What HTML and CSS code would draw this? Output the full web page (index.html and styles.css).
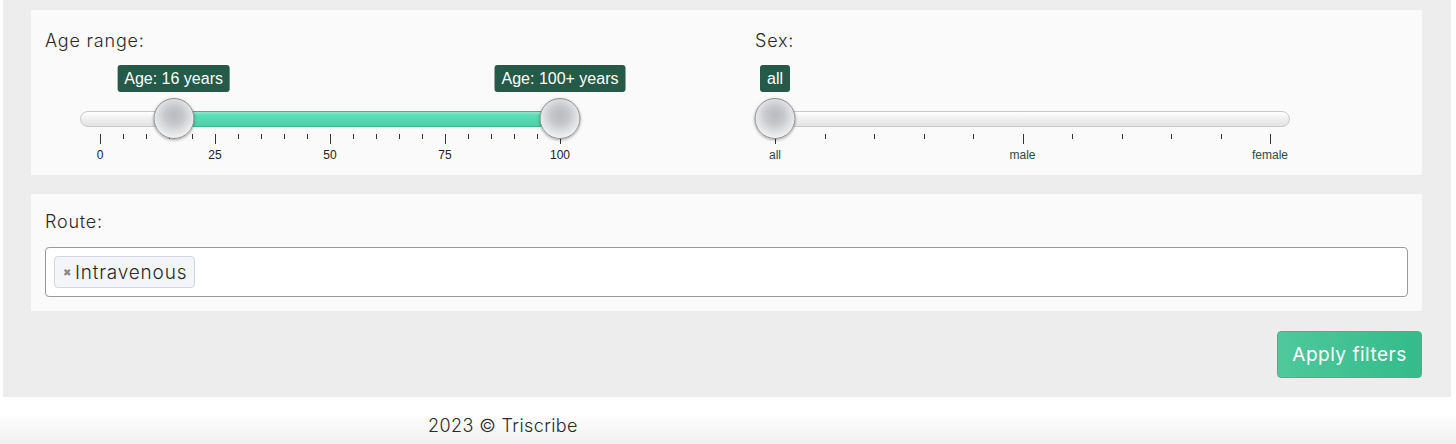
FILE: index.html
```html
<!DOCTYPE html>
<html>
<head>
<meta charset="utf-8">
<link rel="stylesheet" href="styles.css">
</head>
<body>
<main class="wrap">
  <section class="panel panel-sliders">
    <div class="field field-age">
      <div class="label">Age range:</div>
      <div class="irs irs-age">
        <div class="irs-line"></div>
        <div class="irs-scale">
          <div class="irs-bar" style="left:16%;right:0%"></div>
          <span class="tick major" style="left:0%"></span>
          <span class="tick" style="left:5%"></span>
          <span class="tick" style="left:10%"></span>
          <span class="tick" style="left:15%"></span>
          <span class="tick" style="left:20%"></span>
          <span class="tick major" style="left:25%"></span>
          <span class="tick" style="left:30%"></span>
          <span class="tick" style="left:35%"></span>
          <span class="tick" style="left:40%"></span>
          <span class="tick" style="left:45%"></span>
          <span class="tick major" style="left:50%"></span>
          <span class="tick" style="left:55%"></span>
          <span class="tick" style="left:60%"></span>
          <span class="tick" style="left:65%"></span>
          <span class="tick" style="left:70%"></span>
          <span class="tick major" style="left:75%"></span>
          <span class="tick" style="left:80%"></span>
          <span class="tick" style="left:85%"></span>
          <span class="tick" style="left:90%"></span>
          <span class="tick" style="left:95%"></span>
          <span class="tick major" style="left:100%"></span>
          <span class="tick-label" style="left:0%">0</span>
          <span class="tick-label" style="left:25%">25</span>
          <span class="tick-label" style="left:50%">50</span>
          <span class="tick-label" style="left:75%">75</span>
          <span class="tick-label" style="left:100%">100</span>
          <span class="tip" style="left:16%">Age: 16 years</span>
          <span class="tip" style="left:100%">Age: 100+ years</span>
          <span class="handle" style="left:16%"></span>
          <span class="handle" style="left:100%"></span>
        </div>
      </div>
    </div>
    <div class="field field-sex">
      <div class="label">Sex:</div>
      <div class="irs irs-sex">
        <div class="irs-line"></div>
        <div class="irs-scale">
          <span class="tick major" style="left:0%"></span>
          <span class="tick" style="left:10%"></span>
          <span class="tick" style="left:20%"></span>
          <span class="tick" style="left:30%"></span>
          <span class="tick" style="left:40%"></span>
          <span class="tick major" style="left:50%"></span>
          <span class="tick" style="left:60%"></span>
          <span class="tick" style="left:70%"></span>
          <span class="tick" style="left:80%"></span>
          <span class="tick" style="left:90%"></span>
          <span class="tick major" style="left:100%"></span>
          <span class="tick-label green" style="left:0%">all</span>
          <span class="tick-label green" style="left:50%">male</span>
          <span class="tick-label green" style="left:100%">female</span>
          <span class="tip" style="left:0%">all</span>
          <span class="handle" style="left:0%"></span>
        </div>
      </div>
    </div>
  </section>

  <section class="panel panel-route">
    <div class="label">Route:</div>
    <div class="select">
      <span class="tag"><span class="tag-x">✖</span>Intravenous</span>
    </div>
  </section>

  <div class="actions">
    <button class="btn-apply">Apply filters</button>
  </div>
</main>
<footer class="footer">
  <span>2023 © Triscribe</span>
</footer>
</body>
</html>
```

FILE: styles.css
```css
* { box-sizing: border-box; }

html, body {
  margin: 0;
  padding: 0;
  background: #ffffff;
}

body {
  width: 1456px;
  height: 444px;
  overflow: hidden;
  font-family: "Inter", "Noto Sans", "Liberation Sans", sans-serif;
  color: #222;
}

.wrap {
  margin: 0 5px 0 3px;
  background: #ededed;
  padding: 10px 29px 19px 28px;
  display: flex;
  flex-direction: column;
  gap: 19px;
  height: 397px;
}

.panel {
  background: #fafafa;
}

.panel-sliders {
  height: 165px;
  padding: 21px 14px 0 14px;
  display: grid;
  grid-template-columns: 710px 1fr;
}

.label {
  font-size: 18px;
  line-height: 20px;
  font-weight: 300;
  color: #2a2a2a;
  letter-spacing: 0.8px;
}

.irs {
  position: relative;
  height: 96px;
  margin-top: 14px;
}

.irs-age { width: 500px; margin-left: 35px; }
.irs-sex { width: 535px; }

.irs-line {
  position: absolute;
  left: 0;
  right: 0;
  top: 46px;
  height: 16px;
  border: 1px solid #c9c9c9;
  border-radius: 8px;
  background: linear-gradient(to bottom, #ffffff 0%, #f2f2f2 40%, #e2e2e2 100%);
}

.irs-scale {
  position: absolute;
  left: 20px;
  right: 20px;
  top: 0;
  bottom: 0;
}

.irs-bar {
  position: absolute;
  top: 46px;
  height: 16px;
  border: 1px solid #3fb58f;
  background: linear-gradient(to bottom, #8ee9cc 0%, #5cddb6 22%, #52d7ae 70%, #4ccfa5 100%);
}

.tick {
  position: absolute;
  top: 69px;
  width: 1px;
  height: 5px;
  background: #333;
}

.tick.major {
  height: 10px;
}

.tick-label {
  position: absolute;
  top: 83px;
  transform: translateX(-50%);
  font-family: "Liberation Sans", Arial, sans-serif;
  font-size: 12px;
  line-height: 14px;
  color: #222;
}

.tick-label.green { color: #2e4b41; }

.tip {
  position: absolute;
  top: 0;
  transform: translateX(-50%);
  background: #245a47;
  color: #fff;
  font-family: "Liberation Sans", Arial, sans-serif;
  font-size: 16px;
  line-height: 27px;
  height: 27px;
  padding: 0 7px;
  border-radius: 3px;
  white-space: nowrap;
}

.handle {
  position: absolute;
  top: 33px;
  width: 41px;
  height: 41px;
  transform: translateX(-50%);
  border-radius: 50%;
  border: 1px solid #8e8e8e;
  background: radial-gradient(circle at 50% 42%, #b9bbc1 0%, #c6c8cc 30%, #e3e4e6 60%, #fbfbfb 85%);
  box-shadow: 0 1px 3px rgba(0, 0, 0, 0.35);
}

.panel-route {
  height: 117px;
  padding: 18px 14px 0 14px;
}

.select {
  margin-top: 15px;
  height: 50px;
  border: 1px solid #9a9a9a;
  border-radius: 4px;
  background: #fff;
  padding: 8px 8px;
}

.tag {
  display: inline-flex;
  align-items: center;
  height: 32px;
  padding: 0 7px 0 8px;
  border: 1px solid #d3d8e0;
  border-radius: 4px;
  background: #f3f5f8;
  font-size: 19px;
  font-weight: 300;
  letter-spacing: 0.8px;
  color: #2a2a2a;
}

.tag-x {
  font-size: 10px;
  color: #8a8a8a;
  margin-right: 4px;
  letter-spacing: 0;
}

.actions {
  display: flex;
  justify-content: flex-end;
  margin-top: 1px;
}

.btn-apply {
  width: 145px;
  height: 47px;
  border: 1px solid #3ab98b;
  border-radius: 4px;
  background: linear-gradient(to right, #4fc89c 0%, #34bb8b 100%);
  color: #fff;
  font-family: "Inter", "Noto Sans", "Liberation Sans", sans-serif;
  font-size: 19px;
  font-weight: 400;
  letter-spacing: 0.5px;
  padding: 0;
}

.footer {
  height: 47px;
  background: linear-gradient(to bottom, #ffffff 0%, #ffffff 35%, #f0f0f0 100%);
  padding-left: 428px;
  padding-top: 18px;
  font-size: 18px;
  font-weight: 300;
  letter-spacing: 0.4px;
  color: #2a2a2a;
}
```
